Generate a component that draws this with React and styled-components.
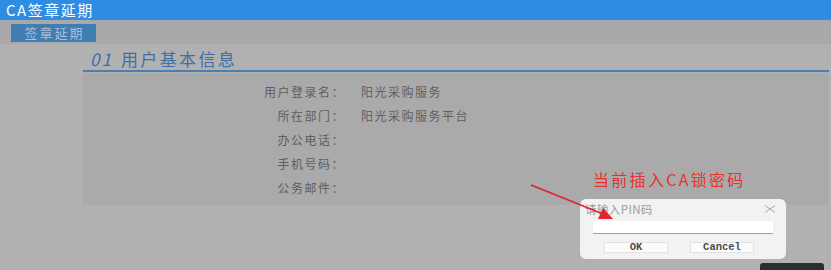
import styled, { createGlobalStyle } from 'styled-components'

const GlobalStyle = createGlobalStyle`
  html, body {
    margin: 0;
    padding: 0;
    background: #b1b1b1;
  }
  * {
    box-sizing: border-box;
  }
`

const Page = styled.div`
  position: relative;
  width: 831px;
  height: 270px;
  overflow: hidden;
  font-family: 'Noto Sans CJK SC', 'Noto Sans', sans-serif;
  background: #b1b1b1;
`

const TopBar = styled.header`
  height: 20px;
  background: #2e8de3;
  color: #fff;
  font-size: 15px;
  line-height: 20px;
  letter-spacing: 1.5px;
  padding-left: 6px;
`

const Toolbar = styled.div`
  height: 24px;
  background: #a9a9a9;
  padding: 4px 11px 2px;
`

const ToolButton = styled.button`
  display: block;
  width: 85px;
  height: 18px;
  border: 0;
  padding: 0 0 0 2px;
  background: #3f7db2;
  color: #a7bfd7;
  font-family: inherit;
  font-size: 13px;
  line-height: 18px;
  letter-spacing: 2px;
`

const Main = styled.main`
  padding: 0 2px 0 83px;
`

const SectionTitle = styled.h2`
  margin: 0;
  height: 28px;
  padding: 5px 0 0 7px;
  border-bottom: 2px solid #4a7fb4;
  color: #3d6fa5;
  font-size: 17px;
  font-weight: 400;
  line-height: 20px;
  letter-spacing: 2.4px;
`

const Num = styled.span`
  font-style: italic;
  margin-right: 8px;
  letter-spacing: 2px;
`

const InfoBody = styled.div`
  margin-top: 1px;
  height: 132px;
  padding: 6px 0;
  background: #aaaaaa;
`

const Row = styled.div`
  display: grid;
  grid-template-columns: 262px 1fr;
  column-gap: 16px;
  height: 24px;
  align-items: center;
  font-size: 12px;
  letter-spacing: 1.5px;
  color: #5e5e5e;
`

const Label = styled.span`
  text-align: right;
`

const Note = styled.div`
  position: absolute;
  left: 593px;
  top: 170px;
  color: #e5322b;
  font-size: 16px;
  letter-spacing: 2.3px;
  line-height: 18px;
`

const Arrow = styled.svg`
  position: absolute;
  left: 0;
  top: 0;
  pointer-events: none;
  z-index: 3;
`

const Dialog = styled.div`
  position: absolute;
  left: 580px;
  top: 199px;
  width: 206px;
  height: 60px;
  background: #f2f2f2;
  border-radius: 6px;
  padding: 2px 10px 0 13px;
  display: flex;
  flex-direction: column;
`

const DialogHead = styled.div`
  display: flex;
  justify-content: space-between;
  align-items: center;
  height: 16px;
  margin-left: -8px;
  color: #9c9c9c;
  font-size: 11.5px;
  letter-spacing: 0.4px;
`

const PinInput = styled.div`
  margin-top: 4px;
  width: 180px;
  height: 13px;
  background: #fff;
  border-bottom: 1.5px solid #7ea8d4;
`

const Buttons = styled.div`
  display: flex;
  gap: 22px;
  margin: 8px 0 0 11px;
`

const DlgButton = styled.div`
  width: 64px;
  height: 11px;
  background: #fbfbfb;
  border: 1px solid #e2e2e2;
  font-family: 'Liberation Mono', 'DejaVu Sans Mono', monospace;
  font-size: 10.5px;
  font-weight: 700;
  color: #4a4a4a;
  line-height: 9px;
  text-align: center;
`

const DarkTab = styled.div`
  position: absolute;
  left: 760px;
  top: 263px;
  width: 64px;
  height: 10px;
  background: #2b2e33;
  border-radius: 3px;
`

const rows = [
  ['用户登录名：', '阳光采购服务'],
  ['所在部门：', '阳光采购服务平台'],
  ['办公电话：', ''],
  ['手机号码：', ''],
  ['公务邮件：', ''],
]

const App = () => {
  return (
    <Page>
      <GlobalStyle />
      <TopBar>CA签章延期</TopBar>
      <Toolbar>
        <ToolButton>签章延期</ToolButton>
      </Toolbar>
      <Main>
        <SectionTitle>
          <Num>01</Num>用户基本信息
        </SectionTitle>
        <InfoBody>
          {rows.map(([label, value]) => (
            <Row key={label}>
              <Label>{label}</Label>
              <span>{value}</span>
            </Row>
          ))}
        </InfoBody>
      </Main>

      <Note>当前插入CA锁密码</Note>

      <Dialog>
        <DialogHead>
          <span>请输入PIN码</span>
          <svg width="12" height="8" viewBox="0 0 12 8">
            <path d="M1 0.5 L11 7.5 M11 0.5 L1 7.5" stroke="#a0a0a0" strokeWidth="0.9" fill="none" />
          </svg>
        </DialogHead>
        <PinInput />
        <Buttons>
          <DlgButton>OK</DlgButton>
          <DlgButton>Cancel</DlgButton>
        </Buttons>
      </Dialog>

      <Arrow width="831" height="270" viewBox="0 0 831 270">
        <line x1="531" y1="185" x2="603" y2="214" stroke="#e0252a" strokeWidth="1.8" />
        <path d="M613 219 L598 219 L603 208 Z" fill="#e0252a" />
      </Arrow>

      <DarkTab />
    </Page>
  )
}

export default App
